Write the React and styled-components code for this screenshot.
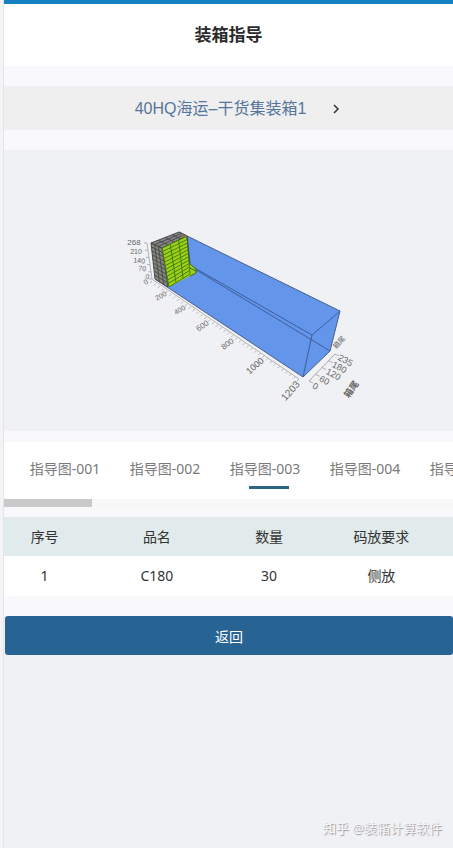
import React, { useState } from "react";
import styled, { createGlobalStyle } from "styled-components";

const GlobalStyle = createGlobalStyle`
  *, *::before, *::after { box-sizing: border-box; }
  body {
    margin: 0;
    background: #f0f1f5;
    color: #333;
    font: 14px/20px "Noto Sans", "Noto Sans CJK SC", sans-serif;
  }
`;

const Page = styled.div`
  min-height: 100vh;
  display: flex;
  flex-direction: column;
  padding-left: 4px;
  background: linear-gradient(to right, #f4f4f6 3px, #e4e5e9 3px, #e4e5e9 4px, #f0f1f5 4px);
`;

const Header = styled.header`
  height: 66px;
  display: flex;
  align-items: center;
  justify-content: center;
  padding-bottom: 2px;
  border-top: 4px solid #1580c2;
  background: #fff;
`;

const Title = styled.h1`
  margin: 0;
  font: 700 17px/24px "Noto Sans CJK SC", sans-serif;
  color: #2b2b2b;
`;

const Content = styled.main`
  display: flex;
  flex-direction: column;
  padding: 20px 0;
  background: #f9f9fb;
`;

const ContainerPicker = styled.button`
  height: 44px;
  display: flex;
  align-items: center;
  justify-content: center;
  gap: 24px;
  padding: 2px 0 0 20px;
  border: 0;
  background: #efefef;
  color: #55759b;
  font: 16px/24px "Liberation Sans", "Noto Sans CJK SC", sans-serif;
  cursor: pointer;
`;

const ChevronIcon = styled.svg`
  width: 12px;
  height: 12px;
  fill: none;
  stroke: #333;
  stroke-width: 1.5;
`;

const ChartPanel = styled.section`
  margin: 20px 0 11px;
  background: #f0f1f5;
`;

const Chart = styled.svg`
  display: block;
  width: 100%;
  height: 281px;
  font-family: "Liberation Sans", "Noto Sans CJK SC", sans-serif;
  fill: #666;
`;

const TabList = styled.div`
  display: flex;
  height: 57px;
  padding-left: 11px;
  overflow: hidden;
  background: #fff;
`;

const Tab = styled.button`
  flex: 0 0 100px;
  display: flex;
  flex-direction: column;
  align-items: center;
  gap: 7px;
  padding: 17px 0 0;
  border: 0;
  background: transparent;
  color: #7a7a7a;
  font: inherit;
  white-space: nowrap;
  cursor: pointer;

  &::after {
    content: "";
    width: 40px;
    height: 3px;
    margin-left: 8px;
    background: ${({ $active }) => ($active ? "#2d6684" : "transparent")};
  }
`;

const ScrollTrack = styled.div`
  height: 8px;
  margin-bottom: 10px;
  background: #f7f7f8;
`;

const ScrollThumb = styled.div`
  width: 88px;
  height: 8px;
  background: #c9c9c9;
`;

const CargoTable = styled.table`
  width: 100%;
  table-layout: fixed;
  border-collapse: collapse;
  background: #fff;
  text-align: center;
`;

const HeadCell = styled.th`
  height: 39px;
  padding: 0 31px 0 0;
  background: #e1ebeb;
  font-weight: 400;
  white-space: nowrap;
`;

const Cell = styled.td`
  height: 40px;
  padding: 0 31px 0 0;
`;

const BackButton = styled.button`
  height: 39px;
  margin-left: 1px;
  padding: 2px 0 0;
  border: 0;
  border-radius: 3px;
  background: #276493;
  color: #fff;
  font: inherit;
  cursor: pointer;
`;

const Footer = styled.footer`
  margin-top: auto;
  padding: 0 11px 10px;
  text-align: right;
  font-size: 13px;
  color: #f6f6f9;
  text-shadow: 1px 1px 1px #999;
`;

const tabs = ["指导图-001", "指导图-002", "指导图-003", "指导图-004", "指导图-005"];
const columns = ["序号", "品名", "数量", "码放要求"];
const rows = [["1", "C180", "30", "侧放"]];

const axisLabels = [
  ["268", 134, 245, 0, 8],
  ["210", 136, 254, 0, 7],
  ["140", 139, 263, 4, 7],
  ["70", 142, 271, 6, 7],
  ["0", 147, 279, 10, 7],
  ["0", 147, 284, -30, 7],
  ["200", 162, 298, -28, 7],
  ["400", 181, 312, -32, 7],
  ["600", 204, 328, -35, 8],
  ["800", 229, 346, -37, 8],
  ["1000", 257, 368, -42, 9],
  ["1203", 293, 393, -48, 10],
  ["0", 314, 389, 28, 9],
  ["60", 323, 383, 28, 9],
  ["120", 332, 377, 28, 9],
  ["180", 338, 370, 28, 9],
  ["235", 344, 363, 28, 9],
];

const lerp = (a, b, t) => [a[0] + (b[0] - a[0]) * t, a[1] + (b[1] - a[1]) * t];

function Mesh({ corners, cols, lines, stroke, width = 1 }) {
  const [a, b, c, d] = corners;
  const segments = [];
  for (let i = 0; i <= cols; i++) segments.push([lerp(a, b, i / cols), lerp(d, c, i / cols)]);
  for (let i = 0; i <= lines; i++) segments.push([lerp(a, d, i / lines), lerp(b, c, i / lines)]);
  return (
    <path
      d={segments.map(([p, q]) => `M${p.join(" ")}L${q.join(" ")}`).join("")}
      stroke={stroke}
      strokeWidth={width}
      fill="none"
    />
  );
}

function ticks(from, to, count, dx, dy) {
  return Array.from({ length: count + 1 }, (_, i) => {
    const [x, y] = lerp(from, to, i / count);
    return `M${x} ${y}l${dx} ${dy}`;
  }).join("");
}

function LoadingChart() {
  return (
    <Chart viewBox="4 150 449 281" role="img" aria-label="装箱示意图">
      <path d="M151 243L179 232L340 311L330 351L303 377L155 279Z" fill="#6395ea" />
      <path d="M151 243L312 335L340 311M312 335L303 377M188 265L330 351M179 232L188 265" fill="none" stroke="#3d5e9d" />
      <path d="M179 232L340 311L330 351L303 377L155 279" fill="none" stroke="#48608c" />
      <path d="M151 243L179 232L187 236L162 248Z" fill="#858585" />
      <path d="M151 243L162 248L168 287L155 279Z" fill="#85877f" />
      <path d="M162 248L187 236L190 264L196 269L196 273L169 287Z" fill="#9ad317" />
      <Mesh corners={[[151, 243], [179, 232], [187, 236], [162, 248]]} cols={4} lines={3} stroke="#4c4c4c" />
      <Mesh corners={[[151, 243], [162, 248], [168, 287], [155, 279]]} cols={3} lines={9} stroke="#4a4d48" />
      <Mesh corners={[[162, 248], [187, 236], [190, 274], [169, 287]]} cols={3} lines={11} stroke="#4b7a13" />
      <path d="M190 264L196 269L196 273L190 276M190 268L196 271" fill="none" stroke="#3f6b18" />
      <path d="M181 235l6 2l1 5" fill="none" stroke="#a4742d" />
      <path d="M187 236L190 264" stroke="#324b48" />
      <path d={"M147 243L152 279L299 379" + ticks([147, 243], [152, 279], 5, -3, 0) + ticks([152, 281], [299, 379], 38, -2, 2)} fill="none" stroke="#999" strokeWidth="0.7" />
      <path d={"M309 381L335 354" + ticks([309, 381], [335, 354], 4, 4, 2)} fill="none" stroke="#999" strokeWidth="0.8" />
      {axisLabels.map(([label, x, y, angle, size], i) => (
        <text key={i} x={x} y={y} fontSize={size} textAnchor="middle" transform={`rotate(${angle} ${x} ${y})`}>
          {label}
        </text>
      ))}
      <text x="341" y="344" fontSize="7" textAnchor="middle" transform="rotate(-48 341 344)">箱尾</text>
      <text x="354" y="391" fontSize="9" fontWeight="700" textAnchor="middle" transform="rotate(-55 354 391)">箱尾</text>
    </Chart>
  );
}

export default function App() {
  const [active, setActive] = useState(2);
  return (
    <>
      <GlobalStyle />
      <Page>
        <Header>
          <Title>装箱指导</Title>
        </Header>
        <Content>
          <ContainerPicker type="button">
            40HQ海运–干货集装箱1
            <ChevronIcon viewBox="0 0 12 12" aria-hidden="true">
              <path d="M4 2L8 6L4 10" />
            </ChevronIcon>
          </ContainerPicker>
          <ChartPanel>
            <LoadingChart />
          </ChartPanel>
          <TabList role="tablist">
            {tabs.map((label, i) => (
              <Tab
                key={label}
                type="button"
                role="tab"
                aria-selected={i === active}
                $active={i === active}
                onClick={() => setActive(i)}
              >
                {label}
              </Tab>
            ))}
          </TabList>
          <ScrollTrack>
            <ScrollThumb />
          </ScrollTrack>
          <CargoTable>
            <thead>
              <tr>
                {columns.map((name) => (
                  <HeadCell key={name} scope="col">{name}</HeadCell>
                ))}
              </tr>
            </thead>
            <tbody>
              {rows.map((row) => (
                <tr key={row[0]}>
                  {row.map((value, i) => (
                    <Cell key={columns[i]}>{value}</Cell>
                  ))}
                </tr>
              ))}
            </tbody>
          </CargoTable>
        </Content>
        <BackButton type="button">返回</BackButton>
        <Footer>知乎 @装箱计算软件</Footer>
      </Page>
    </>
  );
}
